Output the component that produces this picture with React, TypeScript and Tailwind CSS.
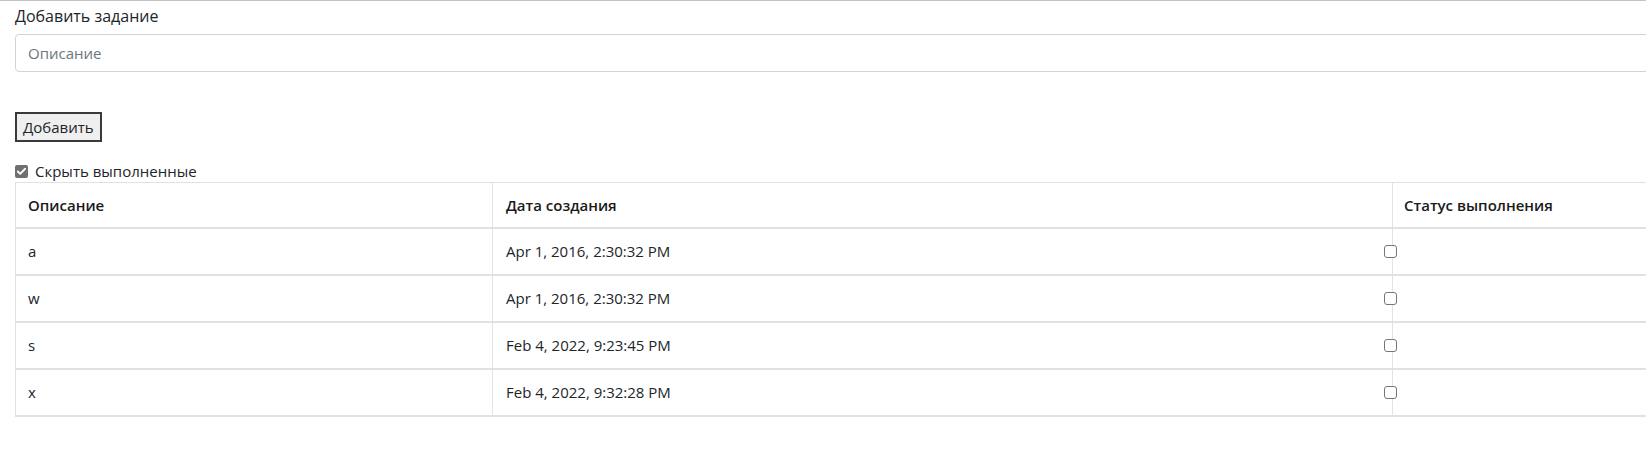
import { Check } from 'lucide-react';

const tasks = [
  { text: 'a', date: 'Apr 1, 2016, 2:30:32 PM' },
  { text: 'w', date: 'Apr 1, 2016, 2:30:32 PM' },
  { text: 's', date: 'Feb 4, 2022, 9:23:45 PM' },
  { text: 'x', date: 'Feb 4, 2022, 9:32:28 PM' },
];

const font = { fontFamily: '"Open Sans", "Noto Sans", sans-serif' };

export default function App() {
  return (
    <div className="h-[476px] overflow-hidden bg-white border-t border-[#c4c4c4] text-[#212529]" style={font}>
      <div className="w-[1700px] pl-[15px] text-[16px]">
        {/* Form */}
        <div className="h-[33px] pt-[3px] leading-6">Добавить задание</div>
        <input
          className="block w-full h-[38px] px-[12px] text-[15px] border border-[#ced4da] rounded-[4px] outline-none placeholder:text-[#6c757d]"
          placeholder="Описание"
        />
        <button className="mt-[40px] h-[30px] px-[6px] text-[15px] border-2 border-[#3a3a3a] bg-[#efefef] leading-none">
          Добавить
        </button>

        <label className="flex items-center gap-[7px] h-[40px] pt-[18px] text-[15px]">
          <span className="w-[13px] h-[13px] rounded-[2px] bg-[#707070] flex items-center justify-center">
            <Check className="w-[11px] h-[11px] text-white" strokeWidth={4} />
          </span>
          Скрыть выполненные
        </label>

        {/* Table */}
        <div className="border-t border-l border-[#dee2e6] text-[15px]">
          <div className="grid grid-cols-[476px_900px_1fr] h-[46px] border-b-2 border-[#dee2e6] font-semibold text-[#1a1a1a]">
            <div className="flex items-center px-[12px]">Описание</div>
            <div className="flex items-center px-[13px] border-l border-[#e3e3e3]">Дата создания</div>
            <div className="flex items-center px-[11px] border-l border-[#e3e3e3]">Статус выполнения</div>
          </div>
          {tasks.map((t, i) => (
            <div key={i} className="grid grid-cols-[476px_900px_1fr] h-[47px] border-b-2 border-[#dee2e6]">
              <div className="flex items-center px-[12px]">{t.text}</div>
              <div className="flex items-center px-[13px] border-l border-[#e3e3e3]">{t.date}</div>
              <div className="flex items-center border-l border-[#e3e3e3]">
                <span className="-ml-[9px] w-[13px] h-[13px] rounded-[3px] border border-[#767676] bg-white" />
              </div>
            </div>
          ))}
        </div>
      </div>
    </div>
  );
}
